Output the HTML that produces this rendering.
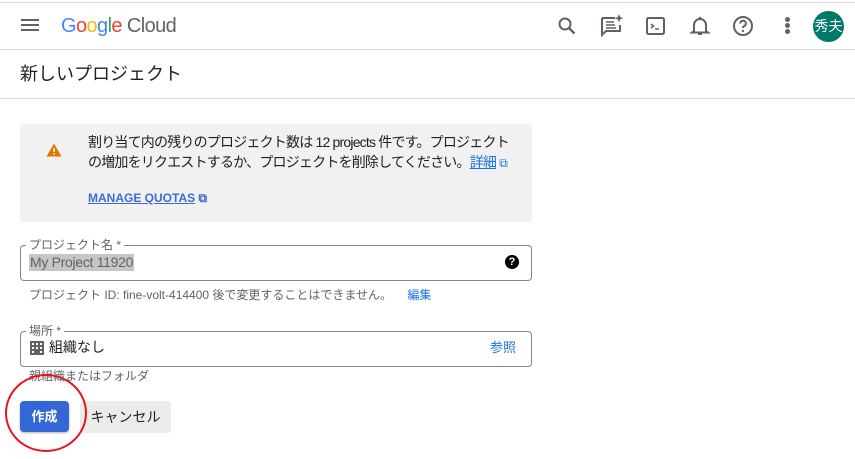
<!DOCTYPE html>
<html><head><meta charset="utf-8"><style>
*{box-sizing:border-box;margin:0;padding:0}
body{width:855px;height:459px;overflow:hidden;background:#fff;font-family:"Liberation Sans","Noto Sans CJK JP",sans-serif;color:#202124;position:relative}
.a{position:absolute}
.lbl{font-size:12px;color:#5f6368;background:#fff;padding:0 3px;line-height:14px}
</style></head><body>
<div class="a" style="left:0;top:2px;width:855px;height:1px;background:#dadce0"></div>
<div class="a" style="left:0;top:49px;width:855px;height:1px;background:#dadce0"></div>
<div class="a" style="left:0;top:98px;width:855px;height:1px;background:#dadce0"></div>
<div class="a" style="left:21px;top:19px;width:18px;height:2px;background:#5f6368;box-shadow:0 5px 0 #5f6368,0 10px 0 #5f6368"></div>
<div class="a" style="left:61px;top:13px;font-size:20px;letter-spacing:-0.6px;line-height:26px;white-space:nowrap"><span style="color:#4285f4">G</span><span style="color:#ea4335">o</span><span style="color:#fbbc05">o</span><span style="color:#4285f4">g</span><span style="color:#34a853">l</span><span style="color:#ea4335">e</span> <span style="color:#5f6368">Cloud</span></div>
<svg class="a" style="left:555px;top:14px" width="24" height="24" viewBox="0 0 24 24"><circle cx="10" cy="10" r="5.5" fill="none" stroke="#5f6368" stroke-width="2"/><path d="M14 14l5.5 5.5" stroke="#5f6368" stroke-width="2.4"/></svg>
<svg class="a" style="left:599px;top:13px" width="26" height="26" viewBox="0 0 26 26"><path d="M3 5h13M3 5v17l4-4h14v-6" fill="none" stroke="#5f6368" stroke-width="2"/><path d="M7 9h8M7 12h9M7 15h10" stroke="#5f6368" stroke-width="1.6"/><path d="M20 1l1.2 3 3 1.2-3 1.2L20 9.5l-1.2-3.1-3-1.2 3-1.2z" fill="#5f6368"/></svg>
<svg class="a" style="left:644px;top:14px" width="24" height="24" viewBox="0 0 24 24"><rect x="3" y="4" width="17" height="16" rx="1.5" fill="none" stroke="#5f6368" stroke-width="2"/><path d="M7 10l2.5 2L7 14M11 15h4" fill="none" stroke="#5f6368" stroke-width="1.6"/></svg>
<svg class="a" style="left:688px;top:14px" width="24" height="24" viewBox="0 0 24 24"><path d="M6 17V11a6 6 0 0 1 12 0v6l2 1.5H4z M10 20h4" fill="none" stroke="#5f6368" stroke-width="2"/><circle cx="12" cy="4" r="1.3" fill="#5f6368"/></svg>
<svg class="a" style="left:731px;top:14px" width="24" height="24" viewBox="0 0 24 24"><circle cx="12" cy="12" r="9" fill="none" stroke="#5f6368" stroke-width="2"/><path d="M9.3 9.5a2.8 2.8 0 1 1 3.8 2.6c-.8.4-1.1.9-1.1 1.9" fill="none" stroke="#5f6368" stroke-width="2"/><circle cx="12" cy="17" r="1.2" fill="#5f6368"/></svg>
<div class="a" style="left:785px;top:17px;width:5px;height:5px;border-radius:50%;background:#5f6368;box-shadow:0 6px 0 #5f6368,0 12px 0 #5f6368"></div>
<div class="a" style="left:813px;top:11px;width:31px;height:31px;border-radius:50%;background:#00796b;color:#fff;font-size:14px;line-height:31px;text-align:center">秀夫</div>
<div class="a" style="left:20px;top:62px;font-size:18px;line-height:24px">新しいプロジェクト</div>
<div class="a" style="left:20px;top:124px;width:512px;height:98px;background:#f1f1f1;border-radius:4px"></div>
<svg class="a" style="left:46px;top:143px" width="16" height="14" viewBox="0 0 16 14"><path d="M8 0.5L15.5 13.5H0.5z" fill="#e37400"/><path d="M8 5v4" stroke="#fff" stroke-width="1.6"/><circle cx="8" cy="11" r="0.9" fill="#fff"/></svg>
<div class="a" style="left:88px;top:132px;font-size:14px;line-height:20px;letter-spacing:-0.8px;white-space:nowrap;color:#202124">割り当て内の残りのプロジェクト数は 12 projects 件です。プロジェクト<br>の増加をリクエストするか、プロジェクトを削除してください。<span style="color:#1a73e8;text-decoration:underline">詳細</span> <span style="color:#1a73e8;font-size:12px">⧉</span></div>
<div class="a" style="left:88px;top:190px;font-size:12px;font-weight:bold;color:#3b6bd6;line-height:16px;white-space:nowrap"><span style="text-decoration:underline">MANAGE QUOTAS</span> <span>⧉</span></div>
<div class="a" style="left:20px;top:245px;width:512px;height:36px;border:1px solid #80868b;border-radius:4px"></div>
<div class="a lbl" style="left:26px;top:238px">プロジェクト名 *</div>
<div class="a" style="left:29px;top:254px;font-size:14px;line-height:17px;background:#c6c6c6;color:#5f6368;padding:0 1px;letter-spacing:-0.3px">My Project 11920</div>
<div class="a" style="left:505px;top:255px;width:14px;height:14px;border-radius:50%;background:#000;color:#fff;font-size:11px;font-weight:bold;text-align:center;line-height:14px">?</div>
<div class="a" style="left:29px;top:288px;font-size:12px;color:#5f6368;line-height:15px;white-space:nowrap">プロジェクト ID: fine-volt-414400 後で変更することはできません。 <span style="color:#1a73e8;margin-left:12px">編集</span></div>
<div class="a" style="left:20px;top:331px;width:512px;height:36px;border:1px solid #80868b;border-radius:4px"></div>
<div class="a lbl" style="left:26px;top:324px">場所 *</div>
<svg class="a" style="left:30px;top:341px" width="14" height="14" viewBox="0 0 14 14"><rect width="14" height="14" fill="#5f6368"/><g fill="#fff"><rect x="2" y="2" width="2" height="2"/><rect x="6" y="2" width="2" height="2"/><rect x="10" y="2" width="2" height="2"/><rect x="2" y="6" width="2" height="2"/><rect x="6" y="6" width="2" height="2"/><rect x="10" y="6" width="2" height="2"/><rect x="2" y="10" width="2" height="2"/><rect x="10" y="10" width="2" height="2"/></g></svg>
<div class="a" style="left:49px;top:339px;font-size:14px;line-height:17px">組織なし</div>
<div class="a" style="left:490px;top:340px;font-size:13px;color:#1a73e8;line-height:16px">参照</div>
<div class="a" style="left:29px;top:369px;font-size:12px;color:#5f6368;line-height:15px">親組織またはフォルダ</div>
<div class="a" style="left:20px;top:401px;width:49px;height:31px;background:#3367d6;border-radius:4px;color:#fff;font-size:13px;font-weight:bold;text-align:center;line-height:31px;box-shadow:0 1px 2px rgba(0,0,0,.3)">作成</div>
<div class="a" style="left:80px;top:401px;width:91px;height:32px;background:#ebebeb;border-radius:4px;font-size:14px;text-align:center;line-height:32px">キャンセル</div>
<svg class="a" style="left:0;top:370px" width="100" height="85"><ellipse cx="46" cy="43" rx="40" ry="38" fill="none" stroke="#e8141c" stroke-width="2"/></svg>
</body></html>
